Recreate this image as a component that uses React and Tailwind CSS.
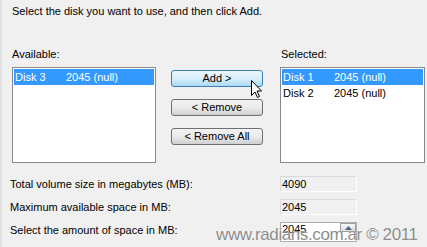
import React from 'react';

const disksAvailable = [{ name: 'Disk 3', size: '2045 (null)', selected: true }];
const disksSelected = [
    { name: 'Disk 1', size: '2045 (null)', selected: true },
    { name: 'Disk 2', size: '2045 (null)', selected: false },
];

const ListBox = ({ items }) => (
    <div className="h-[96px] border border-[#828790] bg-white p-px">
        {items.map(d => (
            <div
                key={d.name}
                className={`flex h-[16px] items-center leading-none pl-[1px] ${d.selected ? 'bg-[#3399ff] text-white' : 'text-black'}`}
            >
                <span className="w-[51px]">{d.name}</span>
                <span>{d.size}</span>
            </div>
        ))}
    </div>
);

const Button = ({ children, hot }) => (
    <div
        className={`flex h-[17px] w-[92px] items-center justify-center rounded-[3px] border leading-none ${
            hot
                ? 'border-[#3c7fb1] bg-gradient-to-b from-[#eaf6fd] via-[#d9f0fc] to-[#a7d9f5]'
                : 'border-[#707070] bg-gradient-to-b from-[#f2f2f2] via-[#ebebeb] to-[#cfcfcf]'
        }`}
    >
        {children}
    </div>
);

export default function App() {
    return (
        <div className="relative h-[247px] w-[427px] overflow-hidden border-l-2 border-[#e2e2e2] bg-[#f0f0f0] text-[11px] text-black font-['Liberation_Sans',Arial,sans-serif]">
            <div className="pl-[10px] pt-[4px] leading-[14px]">Select the disk you want to use, and then click Add.</div>

            <div className="mt-[29px] flex pl-[10px]">
                <div className="w-[144px]">
                    <div className="mb-[6px] leading-[14px]">Available:</div>
                    <ListBox items={disksAvailable} />
                </div>
                <div className="ml-[15px] mt-[23px] flex flex-col gap-[12px]">
                    <Button hot>Add &gt;</Button>
                    <Button>&lt; Remove</Button>
                    <Button>&lt; Remove All</Button>
                </div>
                <div className="ml-[17px] w-[145px]">
                    <div className="mb-[6px] pl-[1px] leading-[14px]">Selected:</div>
                    <ListBox items={disksSelected} />
                </div>
            </div>

            <div className="mt-[13px] grid grid-cols-[270px_77px] gap-y-[7px] pl-[8px]">
                <div className="flex h-[16px] items-center">Total volume size in megabytes (MB):</div>
                <div className="flex h-[16px] items-center border border-[#dadada] border-b-white border-r-white pl-px">4090</div>
                <div className="flex h-[16px] items-center">Maximum available space in MB:</div>
                <div className="flex h-[16px] items-center border border-[#dadada] border-b-white border-r-white pl-px">2045</div>
                <div className="flex h-[16px] items-center">Select the amount of space in MB:</div>
                <div className="flex h-[20px] items-start border border-[#abadb3] bg-white pl-px">
                    <span className="flex-1 pt-[1px] leading-none">2045</span>
                    <div className="flex h-[9px] w-[16px] items-center justify-center border border-[#a0a0a0] bg-gradient-to-b from-[#f6f6f6] to-[#dcdcdc]">
                        <svg width="7" height="4" viewBox="0 0 7 4"><path d="M0 4 L3.5 0 L7 4 Z" fill="#4d6185" /></svg>
                    </div>
                </div>
            </div>

            <div className="absolute left-[214px] top-[226px] text-[17px] leading-none tracking-[-0.4px] text-[#8d8d8d] [text-shadow:0_0_1px_#fff]">
                www.radians.com.ar © 2011
            </div>

            <svg className="absolute left-[249px] top-[80px]" width="12" height="19" viewBox="0 0 12 19">
                <path d="M0.5 0.5 L0.5 15.5 L4 12 L6.5 17.5 L8.5 16.5 L6 11 L10.5 11 Z" fill="#fff" stroke="#000" strokeWidth="1" strokeLinejoin="round" />
            </svg>
        </div>
    );
}
